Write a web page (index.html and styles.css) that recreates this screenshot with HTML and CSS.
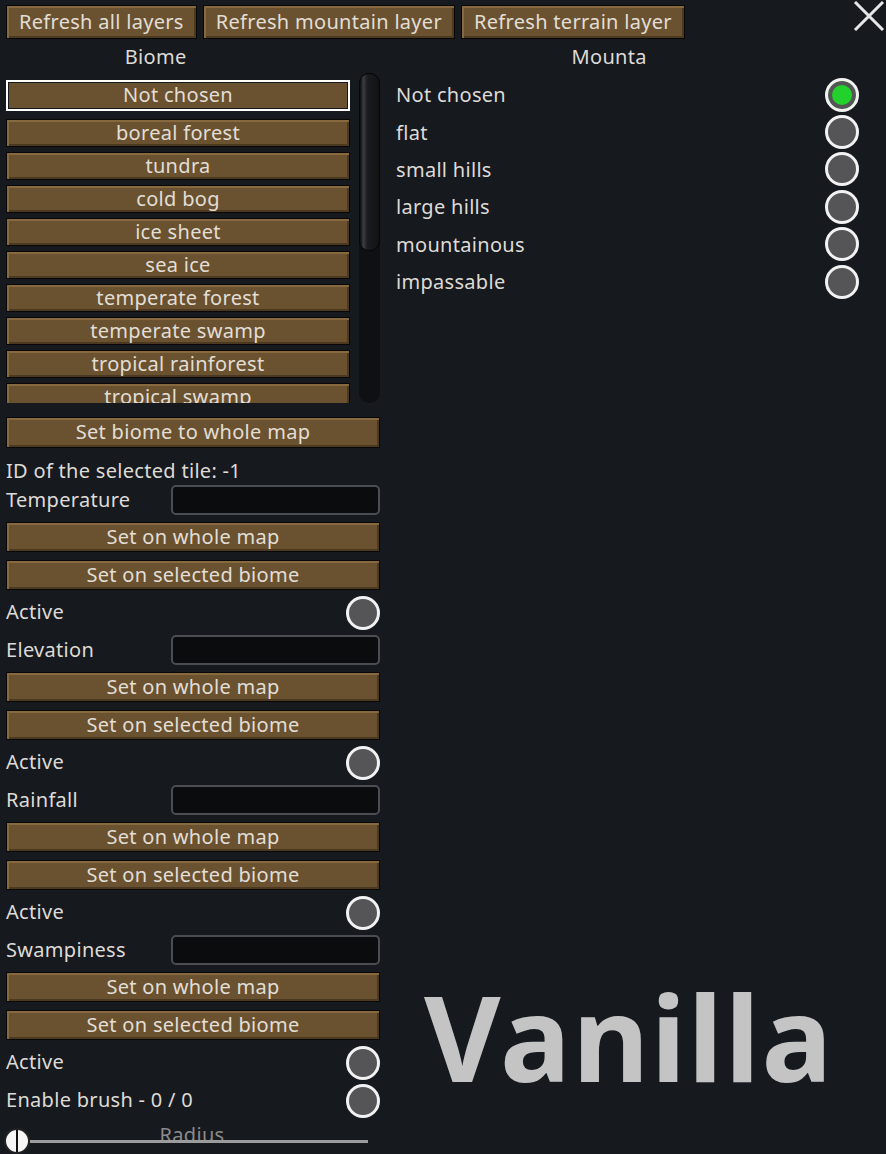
FILE: index.html
```html
<!DOCTYPE html>
<html>
<head>
<meta charset="utf-8">
<link rel="stylesheet" href="styles.css">
</head>
<body>
<div class="page">
  <div class="topbar">
    <div class="btn top-btn">Refresh all layers</div>
    <div class="btn top-btn">Refresh mountain layer</div>
    <div class="btn top-btn">Refresh terrain layer</div>
  </div>
  <div class="headers">
    <div class="h-biome">Biome</div>
    <div class="h-mount">Mounta</div>
  </div>
  <div class="columns">
    <div class="left">
      <div class="list-wrap">
        <div class="list">
          <div class="btn item selected"><span>Not chosen</span></div>
          <div class="btn item">boreal forest</div>
          <div class="btn item">tundra</div>
          <div class="btn item">cold bog</div>
          <div class="btn item">ice sheet</div>
          <div class="btn item">sea ice</div>
          <div class="btn item">temperate forest</div>
          <div class="btn item">temperate swamp</div>
          <div class="btn item">tropical rainforest</div>
          <div class="btn item">tropical swamp</div>
        </div>
        <div class="scroll"><div class="thumb"></div></div>
      </div>
      <div class="btn wide whole">Set biome to whole map</div>
      <div class="tile-id">ID of the selected tile: -1</div>

      <div class="group">
        <div class="field"><span class="label">Temperature</span><div class="input"></div></div>
        <div class="btn wide">Set on whole map</div>
        <div class="btn wide">Set on selected biome</div>
        <div class="toggle"><span class="label">Active</span><span class="radio"></span></div>
      </div>
      <div class="group">
        <div class="field"><span class="label">Elevation</span><div class="input"></div></div>
        <div class="btn wide">Set on whole map</div>
        <div class="btn wide">Set on selected biome</div>
        <div class="toggle"><span class="label">Active</span><span class="radio"></span></div>
      </div>
      <div class="group">
        <div class="field"><span class="label">Rainfall</span><div class="input"></div></div>
        <div class="btn wide">Set on whole map</div>
        <div class="btn wide">Set on selected biome</div>
        <div class="toggle"><span class="label">Active</span><span class="radio"></span></div>
      </div>
      <div class="group">
        <div class="field"><span class="label">Swampiness</span><div class="input"></div></div>
        <div class="btn wide">Set on whole map</div>
        <div class="btn wide">Set on selected biome</div>
        <div class="toggle"><span class="label">Active</span><span class="radio"></span></div>
      </div>
      <div class="toggle brush"><span class="label">Enable brush - 0 / 0</span><span class="radio"></span></div>
      <div class="slider">
        <span class="knob"></span>
        <div class="track-area">
          <span class="radius">Radius</span>
          <span class="track"></span>
        </div>
      </div>
    </div>
    <div class="right">
      <div class="mrow"><span class="label">Not chosen</span><span class="radio on"></span></div>
      <div class="mrow"><span class="label">flat</span><span class="radio"></span></div>
      <div class="mrow"><span class="label">small hills</span><span class="radio"></span></div>
      <div class="mrow"><span class="label">large hills</span><span class="radio"></span></div>
      <div class="mrow"><span class="label">mountainous</span><span class="radio"></span></div>
      <div class="mrow"><span class="label">impassable</span><span class="radio"></span></div>
    </div>
  </div>
  <div class="close">
    <svg width="32" height="30" viewBox="0 0 32 30"><path d="M2 1 L30 29 M30 1 L2 29" stroke="#e6e6e6" stroke-width="3" fill="none"/></svg>
  </div>
  <div class="watermark">Vanilla</div>
</div>
</body>
</html>
```

FILE: styles.css
```css
* { box-sizing: border-box; }
html, body { margin: 0; padding: 0; }
body {
  background: #16191e;
  font-family: "Noto Sans", "DejaVu Sans", sans-serif;
  color: #dedbd6;
  font-size: 20px;
  letter-spacing: 0.3px;
  width: 886px;
  height: 1154px;
  overflow: hidden;
}
.page { position: relative; padding: 5px 6px 0; height: 1154px; }

.btn {
  background: #6a5230;
  border: 1px solid #0a0806;
  box-shadow: inset 2px 2px 0 #86693f, inset -2px -2px 0 #4b3a21;
  color: #e2ded6;
  text-align: center;
  white-space: nowrap;
  display: flex;
  align-items: center;
  justify-content: center;
  padding-bottom: 2px;
}
.topbar { display: flex; gap: 6px; height: 34px; }
.top-btn { padding: 0 12px 1px; }

.headers { display: flex; height: 34px; align-items: center; }
.h-biome { width: 304px; text-align: center; }
.h-mount { margin-left: 33px; width: 550px; text-align: center; }

.columns { display: grid; grid-template-columns: 374px 1fr; column-gap: 16px; }

.list-wrap { display: flex; gap: 9px; height: 330px; }
.list { width: 345px; overflow: hidden; padding-top: 7px; display: flex; flex-direction: column; gap: 5px; }
.item { height: 28px; flex: none; }
.item.selected { height: 31px; border: 2px solid #ffffff; box-shadow: none; background: transparent; padding: 1px; margin-bottom: 3px; }
.item.selected span {
  flex: 1; align-self: stretch; display: flex; align-items: center; justify-content: center;
  background: #6a5230; padding-bottom: 2px;
}
.scroll {
  width: 21px; height: 330px; border-radius: 10px; background: #0e1014;
}
.thumb {
  width: 21px; height: 178px; border-radius: 10px;
  background: linear-gradient(90deg, #0b0c0e 0%, #3a3c40 18%, #1a1b1e 40%, #111214 100%);
  border: 1px solid #050607;
}

.wide { height: 30px; }
.whole { margin-top: 14px; height: 31px; }
.tile-id { height: 37px; display: flex; align-items: center; padding-top: 8px; }

.group { display: flex; flex-direction: column; }
.field { display: flex; align-items: center; justify-content: space-between; height: 30px; margin-bottom: 7px; }
.field .label { margin-bottom: 2px; }
.toggle .label { margin-bottom: 3px; }
.input {
  width: 209px; height: 30px; background: #0b0c0e;
  border: 2px solid #4a4d52; border-radius: 5px;
}
.group .wide + .wide { margin-top: 8px; }
.toggle { display: flex; align-items: center; justify-content: space-between; height: 34px; margin-top: 6px; margin-bottom: 5px; }
.toggle.brush { margin-top: -1px; margin-bottom: 0; }

.radio {
  width: 34px; height: 34px; border-radius: 50%;
  border: 3px solid #f2f2f2; background: #555558;
  display: block; flex: none;
}
.radio.on { background: #23d12c; box-shadow: inset 0 0 0 4px #555558; }

.slider { display: flex; align-items: center; height: 36px; margin-top: 5px; }
.knob {
  width: 26px; height: 26px; border-radius: 50%; flex: none; margin-left: -2px;
  background: linear-gradient(90deg, #f6f6f6 0 44%, #111 44% 56%, #f6f6f6 56% 100%);
  border: 2px solid #222;
}
.track-area { position: relative; width: 338px; height: 30px; display: flex; align-items: center; justify-content: center; }
.radius { color: #8a8a8a; margin-top: -14px; margin-right: 14px; }
.track { position: absolute; left: 0; right: 0; top: 14px; height: 3px; background: #9c9c9c; }

.right { padding-top: 3px; padding-right: 21px; }
.mrow { display: flex; align-items: center; justify-content: space-between; height: 37.4px; }

.close { position: absolute; top: 1px; right: 1px; }
.watermark {
  position: absolute; left: 424px; top: 956px;
  font-family: "Noto Sans", sans-serif; font-weight: 700;
  font-size: 118px; color: #c4c4c4; letter-spacing: 1.7px;
}
```
